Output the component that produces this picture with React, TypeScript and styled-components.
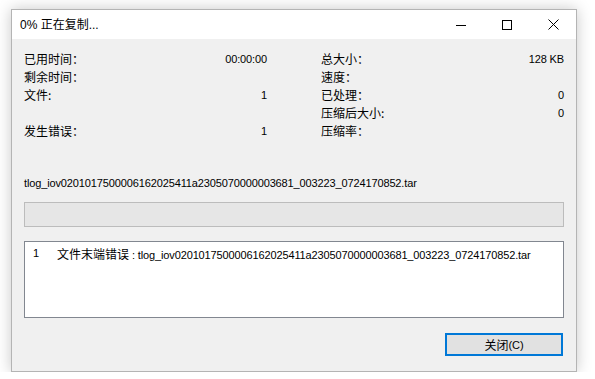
import React, { FC } from "react";
import styled, { createGlobalStyle } from "styled-components";

const GlobalStyle = createGlobalStyle`
  html, body {
    margin: 0;
    padding: 0;
    background: #ffffff;
  }
  body {
    font-family: "Liberation Sans", "Noto Sans CJK SC", sans-serif;
    color: #000;
  }
`;

const Window = styled.div`
  box-sizing: border-box;
  margin: 9px 0 0 11px;
  width: 566px;
  height: 363px;
  background: #f0f0f0;
  border: 1px solid #b4b4b4;
  box-shadow: 0 0 14px rgba(0, 0, 0, 0.22);
  display: flex;
  flex-direction: column;
`;

const TitleBar = styled.div`
  height: 29px;
  background: #ffffff;
  display: flex;
  align-items: center;
  flex-shrink: 0;
`;

const Title = styled.div`
  flex: 1;
  padding-left: 8px;
  font-size: 12px;
  font-family: "Liberation Sans", "Noto Sans CJK SC", sans-serif;
  line-height: 29px;
`;

const CtrlButton = styled.div`
  width: 46px;
  height: 29px;
  display: flex;
  align-items: center;
  justify-content: center;
`;

const Body = styled.div`
  flex: 1;
  padding: 11px 12px 0 12px;
  display: flex;
  flex-direction: column;
`;

const Stats = styled.div`
  display: grid;
  grid-template-columns: 243px 243px;
  column-gap: 54px;
`;

const Column = styled.div`
  display: flex;
  flex-direction: column;
`;

const Row = styled.div`
  height: 18px;
  display: flex;
  align-items: center;
  justify-content: space-between;
`;

const Label = styled.span`
  font-family: "Noto Sans CJK SC", sans-serif;
  font-size: 12px;
  line-height: 18px;
`;

const Value = styled.span`
  font-family: "Liberation Sans", sans-serif;
  font-size: 11px;
  line-height: 18px;
  letter-spacing: -0.13px;
`;

const FileName = styled.div`
  margin-top: 34px;
  font-size: 11px;
  line-height: 18px;
  letter-spacing: -0.13px;
  white-space: nowrap;
`;

const Progress = styled.div`
  box-sizing: border-box;
  margin-top: 10px;
  width: 540px;
  height: 25px;
  background: #e6e6e6;
  border: 1px solid #bcbcbc;
`;

const ErrorList = styled.div`
  box-sizing: border-box;
  margin-top: 14px;
  width: 540px;
  height: 77px;
  background: #ffffff;
  border: 1px solid #828790;
  padding: 2px 0 0 8px;
`;

const ErrorRow = styled.div`
  display: flex;
  height: 18px;
  align-items: center;
  font-size: 11px;
  letter-spacing: -0.13px;
  white-space: nowrap;
`;

const ErrorIndex = styled.span`
  width: 24px;
`;

const Han = styled.span`
  font-family: "Noto Sans CJK SC", sans-serif;
  font-size: 12px;
  letter-spacing: 0;
`;

const Footer = styled.div`
  margin-top: 15px;
  width: 539px;
  display: flex;
  justify-content: flex-end;
`;

const Button = styled.button`
  box-sizing: border-box;
  width: 118px;
  height: 23px;
  background: #e1e1e1;
  border: 2px solid #0078d7;
  padding: 0;
  font-family: "Noto Sans CJK SC", sans-serif;
  font-size: 12px;
  color: #000;
  display: flex;
  align-items: center;
  justify-content: center;
`;

type Stat = { label: string; value?: string };

const left: Stat[] = [
  { label: "已用时间：", value: "00:00:00" },
  { label: "剩余时间：" },
  { label: "文件:", value: "1" },
  { label: "" },
  { label: "发生错误：", value: "1" },
];

const right: Stat[] = [
  { label: "总大小：", value: "128 KB" },
  { label: "速度：" },
  { label: "已处理：", value: "0" },
  { label: "压缩后大小:", value: "0" },
  { label: "压缩率：" },
];

const fileName =
  "tlog_iov0201017500006162025411a2305070000003681_003223_0724170852.tar";

const StatColumn: FC<{ items: Stat[] }> = ({ items }) => (
  <Column>
    {items.map((s, i) => (
      <Row key={i}>
        <Label>{s.label}</Label>
        {s.value && <Value>{s.value}</Value>}
      </Row>
    ))}
  </Column>
);

const App: FC = () => {
  return (
    <>
      <GlobalStyle />
      <Window>
        <TitleBar>
          <Title>
            0% <Han>正在复制</Han>...
          </Title>
          <CtrlButton>
            <svg width="10" height="10" viewBox="0 0 10 10">
              <path d="M0 5.5h10" stroke="#000" strokeWidth="1" />
            </svg>
          </CtrlButton>
          <CtrlButton>
            <svg width="10" height="10" viewBox="0 0 10 10">
              <rect x="0.5" y="0.5" width="9" height="9" fill="none" stroke="#000" strokeWidth="1" />
            </svg>
          </CtrlButton>
          <CtrlButton>
            <svg width="11" height="11" viewBox="0 0 11 11">
              <path d="M0.5 0.5L10.5 10.5M10.5 0.5L0.5 10.5" stroke="#000" strokeWidth="1" />
            </svg>
          </CtrlButton>
        </TitleBar>
        <Body>
          <Stats>
            <StatColumn items={left} />
            <StatColumn items={right} />
          </Stats>
          <FileName>{fileName}</FileName>
          <Progress />
          <ErrorList>
            <ErrorRow>
              <ErrorIndex>1</ErrorIndex>
              <span>
                <Han>文件末端错误</Han> : {fileName}
              </span>
            </ErrorRow>
          </ErrorList>
          <Footer>
            <Button>
              关闭<Value>(C)</Value>
            </Button>
          </Footer>
        </Body>
      </Window>
    </>
  );
};

export default App;
